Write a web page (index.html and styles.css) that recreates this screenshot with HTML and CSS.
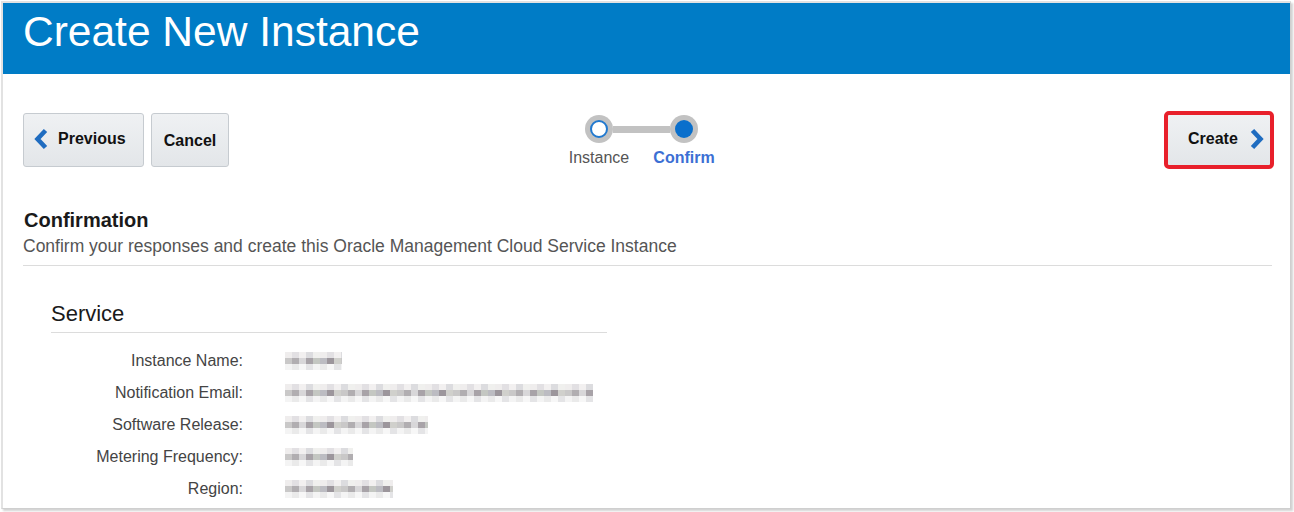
FILE: index.html
```html
<!DOCTYPE html>
<html lang="en">
<head>
<meta charset="utf-8">
<title>Create New Instance</title>
<link rel="stylesheet" href="styles.css">
</head>
<body>
<div class="frame">
  <header class="banner"><h1>Create New Instance</h1></header>
  <main class="content">
    <div class="toolbar">
      <div class="tb-left">
        <button class="btn btn-prev" type="button">
          <svg class="chev" width="14" height="22" viewBox="0 0 14 22"><polyline points="11.5,2.5 3.5,11 11.5,19.5" fill="none" stroke="#1f6cc0" stroke-width="4.6" stroke-linejoin="miter"/></svg>
          <span>Previous</span>
        </button>
        <button class="btn btn-cancel" type="button"><span>Cancel</span></button>
      </div>
      <div class="train">
        <div class="train-track">
          <span class="stop"><span class="dot dot-done"></span></span>
          <span class="link"></span>
          <span class="stop"><span class="dot dot-current"></span></span>
        </div>
        <span class="step-label">Instance</span>
        <span class="step-label step-current">Confirm</span>
      </div>
      <div class="tb-right">
        <button class="btn btn-create" type="button">
          <span>Create</span>
          <svg class="chev" width="14" height="22" viewBox="0 0 14 22"><polyline points="2.5,2.5 10.5,11 2.5,19.5" fill="none" stroke="#1f6cc0" stroke-width="4.6" stroke-linejoin="miter"/></svg>
        </button>
      </div>
    </div>

    <section class="confirm">
      <h2>Confirmation</h2>
      <p class="subtitle">Confirm your responses and create this Oracle Management Cloud Service Instance</p>
    </section>

    <section class="service">
      <h3>Service</h3>
      <dl class="details">
        <dt>Instance Name:</dt><dd><span class="blur w57"></span></dd>
        <dt>Notification Email:</dt><dd><span class="blur w308"></span></dd>
        <dt>Software Release:</dt><dd><span class="blur w143"></span></dd>
        <dt>Metering Frequency:</dt><dd><span class="blur w68"></span></dd>
        <dt>Region:</dt><dd><span class="blur w108"></span></dd>
      </dl>
    </section>
  </main>
</div>
</body>
</html>
```

FILE: styles.css
```css
html, body {
  margin: 0;
  padding: 0;
  overflow: hidden;
  background: #ffffff;
}

body {
  font-family: "Liberation Sans", Arial, sans-serif;
  color: #333333;
}

.frame {
  box-sizing: border-box;
  margin: 1px 3px 3px 1px;
  height: 508px;
  border-top: 2px solid #e2e2e2;
  border-left: 2px solid #e2e2e2;
  border-right: 1px solid #cfcfcf;
  border-bottom: 1px solid #cfcfcf;
  box-shadow: 2px 2px 2px rgba(0, 0, 0, 0.18);
  overflow: hidden;
}

.banner {
  background: #007cc6;
  height: 71px;
  box-sizing: border-box;
  padding: 5px 20px 0 20px;
}

.banner h1 {
  margin: 0;
  font-weight: normal;
  font-size: 42.5px;
  line-height: 48px;
  color: #ffffff;
}

.content {
  padding: 0 18px 0 20px;
}

/* toolbar */
.toolbar {
  display: grid;
  grid-template-columns: 1fr auto 1fr;
  align-items: start;
  margin-top: 39px;
}

.tb-left {
  display: flex;
  gap: 7px;
}

.tb-right {
  display: flex;
  justify-content: flex-end;
}

.btn {
  box-sizing: border-box;
  height: 54px;
  display: flex;
  align-items: center;
  border: 1px solid #c6cbd0;
  border-radius: 3px;
  background: linear-gradient(#eff1f3, #e3e6e9);
  font-family: "Liberation Sans", Arial, sans-serif;
  font-weight: bold;
  font-size: 16px;
  color: #111111;
  padding: 0;
  margin: 0;
}

.btn-prev {
  width: 121px;
  padding: 0 0 2px 10px;
  gap: 10px;
}

.btn-cancel {
  width: 78px;
  justify-content: center;
  padding-top: 2px;
}

.btn-create {
  width: 106px;
  padding: 0 0 2px 21px;
  gap: 12px;
  outline: 4px solid #e8202b;
  outline-offset: -2px;
}

.chev {
  display: block;
  flex: none;
}

/* train */
.train {
  display: grid;
  grid-template-columns: 85px 85px;
  margin-right: 12px;
  margin-top: 2px;
}

.train-track {
  grid-column: 1 / 3;
  display: flex;
  align-items: center;
  padding: 0 28.5px;
}

.stop {
  width: 28px;
  height: 28px;
  border-radius: 50%;
  background: #c2c2c2;
  display: flex;
  align-items: center;
  justify-content: center;
  flex: none;
}

.link {
  flex: 1;
  height: 7px;
  background: #c2c2c2;
}

.dot {
  box-sizing: border-box;
  width: 18px;
  height: 18px;
  border-radius: 50%;
}

.dot-done {
  background: #ffffff;
  border: 2px solid #2179cf;
}

.dot-current {
  background: #0a6fcc;
}

.step-label {
  text-align: center;
  font-size: 16px;
  line-height: 20px;
  margin-top: 5px;
  color: #555555;
}

.step-current {
  font-weight: bold;
  color: #3c6fd4;
}

/* confirmation */
.confirm {
  margin-top: 40px;
  padding-bottom: 8px;
  border-bottom: 1px solid #dcdcdc;
}

.confirm h2 {
  margin: 0 0 0 1px;
  font-size: 20px;
  line-height: 24px;
  font-weight: bold;
  color: #1a1a1a;
}

.subtitle {
  margin: 3px 0 0 0;
  font-size: 17.5px;
  line-height: 22px;
  color: #555555;
}

/* service */
.service {
  margin: 35px 0 0 28px;
  width: 556px;
}

.service h3 {
  margin: 0;
  font-size: 22px;
  line-height: 26px;
  font-weight: normal;
  color: #1a1a1a;
  padding-bottom: 5px;
  border-bottom: 1px solid #dcdcdc;
}

.details {
  display: grid;
  grid-template-columns: 192px 1fr;
  column-gap: 42px;
  margin: 12px 0 0 0;
}

.details dt,
.details dd {
  margin: 0;
  height: 32px;
  line-height: 32px;
  font-size: 16px;
}

.details dt {
  text-align: right;
  color: #444444;
}

.details dd {
  display: flex;
  align-items: center;
}

.blur {
  display: block;
  height: 18px;
  background:
    repeating-linear-gradient(90deg, #efeded 0 7px, #e2e0e3 7px 14px, #f2f0f0 14px 21px, #dcdcdf 21px 28px, #f0f0ee 28px 35px) top / 100% 6px no-repeat,
    repeating-linear-gradient(90deg, #c9c8c8 0 7px, #b1aeb1 7px 14px, #d8d7d9 14px 21px, #a8a3a8 21px 28px, #c4c7c2 28px 35px, #bcbcc2 35px 42px, #9c969c 42px 49px, #d0d0cc 49px 56px) center / 100% 6px no-repeat,
    repeating-linear-gradient(90deg, #f4f4f4 0 7px, #eaeaea 7px 14px, #f7f7f7 14px 21px, #e4e4e6 21px 28px) bottom / 100% 6px no-repeat;
}

.w57 { width: 57px; }
.w308 { width: 308px; }
.w143 { width: 143px; }
.w68 { width: 68px; }
.w108 { width: 108px; }
```
